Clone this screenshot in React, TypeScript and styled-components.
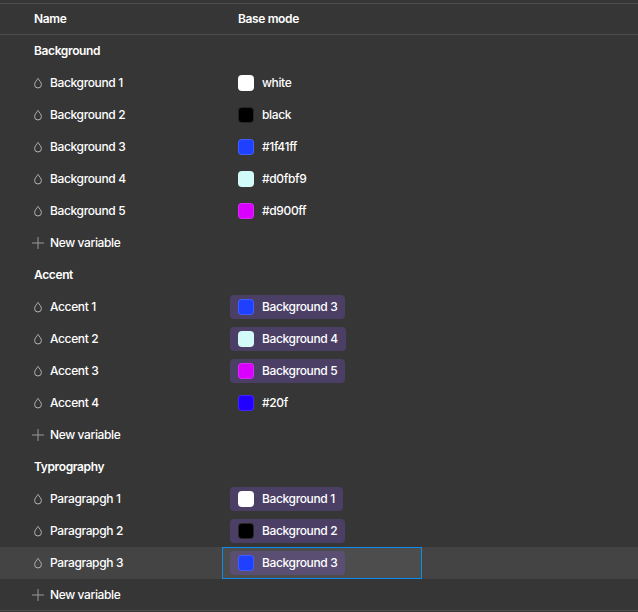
import styled, { createGlobalStyle } from "styled-components";

const GlobalStyle = createGlobalStyle`
  html, body {
    margin: 0;
    padding: 0;
    background: #363636;
  }
  body {
    font-family: Inter, "Noto Sans", sans-serif;
    font-size: 12px;
    font-weight: 450;
    letter-spacing: -0.37px;
    color: #fff;
  }
`;

const Table = styled.div`
  width: 638px;
  height: 612px;
  padding-top: 3px;
  box-sizing: border-box;
  overflow: hidden;
`;

const Row = styled.div<{ $selected?: boolean }>`
  display: grid;
  grid-template-columns: 222px 200px 1fr;
  height: 32px;
  align-items: center;
  background: ${(p) => (p.$selected ? "#444444" : "transparent")};
`;

const Header = styled(Row)`
  height: 32px;
  box-sizing: border-box;
  border-top: 1px solid #4d4d4d;
  border-bottom: 1px solid #4d4d4d;
  font-weight: 600;
`;

const HeaderCell = styled.div<{ $inset: number }>`
  padding-left: ${(p) => p.$inset}px;
  padding-bottom: 2px;
`;

const SectionTitle = styled.div`
  height: 32px;
  line-height: 32px;
  padding-left: 34px;
  font-weight: 600;
`;

const NameCell = styled.div`
  display: flex;
  align-items: center;
  gap: 7px;
  padding-left: 33px;
`;

const Label = styled.span`
  position: relative;
  top: -1px;
`;

const ValueCell = styled.div<{ $focused?: boolean }>`
  display: flex;
  align-items: center;
  height: 32px;
  box-sizing: border-box;
  padding-left: ${(p) => (p.$focused ? 7 : 8)}px;
  border: ${(p) => (p.$focused ? "1px solid #0d8ce9" : "0")};
  background: ${(p) => (p.$focused ? "#4d4d4d" : "transparent")};
`;

const Value = styled.div`
  display: flex;
  align-items: center;
  gap: 8px;
  height: 24px;
  padding: 0 8px;
`;

const Alias = styled(Value)<{ $focused?: boolean }>`
  border-radius: 4px;
  background: ${(p) => (p.$focused ? "#5a4e72" : "#4b3f66")};
`;

const Swatch = styled.span<{ $color: string }>`
  width: 16px;
  height: 16px;
  box-sizing: border-box;
  border-radius: 4px;
  border: 1px solid rgba(255, 255, 255, 0.15);
  background: ${(p) => p.$color};
`;

const AddRow = styled.div`
  display: flex;
  align-items: center;
  gap: 6px;
  height: 32px;
  padding-left: 32px;
`;

const BottomRule = styled.div`
  height: 1px;
  background: #4d4d4d;
  margin-top: -1px;
`;

const DropIcon = () => (
  <svg width="10" height="12" viewBox="0 0 10 12" fill="none">
    <path
      d="M5 1.4C4 3.1 1.6 5.2 1.6 7.6a3.4 3.4 0 0 0 6.8 0C8.4 5.2 6 3.1 5 1.4Z"
      stroke="#b0b0b0"
      strokeWidth="1"
    />
  </svg>
);

const PlusIcon = () => (
  <svg width="12" height="12" viewBox="0 0 12 12" fill="none">
    <path d="M6 0v12M0 6h12" stroke="#9a9a9a" strokeWidth="1" />
  </svg>
);

type Variable = {
  name: string;
  color: string;
  label: string;
  alias?: boolean;
  selected?: boolean;
};

const groups: { title: string; variables: Variable[] }[] = [
  {
    title: "Background",
    variables: [
      { name: "Background 1", color: "#ffffff", label: "white" },
      { name: "Background 2", color: "#000000", label: "black" },
      { name: "Background 3", color: "#1f41ff", label: "#1f41ff" },
      { name: "Background 4", color: "#d0fbf9", label: "#d0fbf9" },
      { name: "Background 5", color: "#d900ff", label: "#d900ff" },
    ],
  },
  {
    title: "Accent",
    variables: [
      { name: "Accent 1", color: "#1f41ff", label: "Background 3", alias: true },
      { name: "Accent 2", color: "#d0fbf9", label: "Background 4", alias: true },
      { name: "Accent 3", color: "#d900ff", label: "Background 5", alias: true },
      { name: "Accent 4", color: "#2200ff", label: "#20f" },
    ],
  },
  {
    title: "Typrography",
    variables: [
      { name: "Paragrapgh 1", color: "#ffffff", label: "Background 1", alias: true },
      { name: "Paragrapgh 2", color: "#000000", label: "Background 2", alias: true },
      { name: "Paragrapgh 3", color: "#1f41ff", label: "Background 3", alias: true, selected: true },
    ],
  },
];

export default function App() {
  return (
    <Table>
      <GlobalStyle />
      <Header>
        <HeaderCell $inset={34}>Name</HeaderCell>
        <HeaderCell $inset={16}>Base mode</HeaderCell>
      </Header>
      {groups.map((group) => (
        <div key={group.title}>
          <SectionTitle>{group.title}</SectionTitle>
          {group.variables.map((v) => {
            const Chip = v.alias ? Alias : Value;
            return (
              <Row key={v.name} $selected={v.selected}>
                <NameCell>
                  <DropIcon />
                  <Label>{v.name}</Label>
                </NameCell>
                <ValueCell $focused={v.selected}>
                  <Chip $focused={v.selected}>
                    <Swatch $color={v.color} />
                    <Label>{v.label}</Label>
                  </Chip>
                </ValueCell>
              </Row>
            );
          })}
          <AddRow>
            <PlusIcon />
            <Label>New variable</Label>
          </AddRow>
        </div>
      ))}
      <BottomRule />
    </Table>
  );
}
